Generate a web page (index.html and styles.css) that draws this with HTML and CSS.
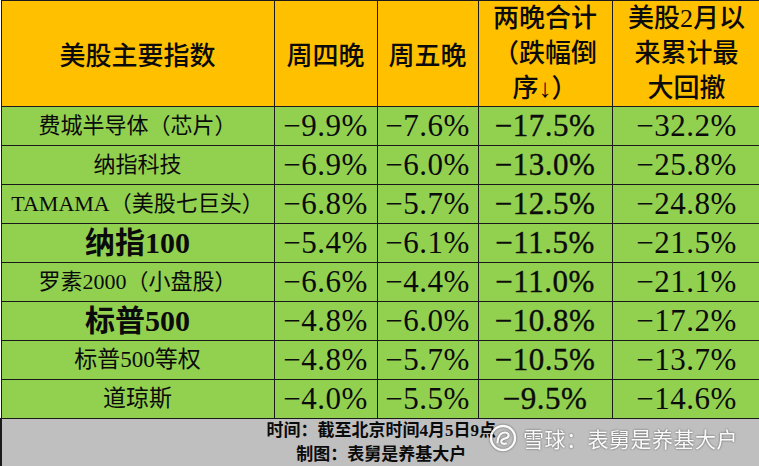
FILE: index.html
```html
<!DOCTYPE html>
<html lang="zh-CN">
<head>
<meta charset="utf-8">
<link rel="stylesheet" href="styles.css">
</head>
<body>
<div class="wrap">
<table class="tbl">
  <colgroup>
    <col class="c1"><col class="c2"><col class="c3"><col class="c4"><col class="c5">
  </colgroup>
  <thead>
    <tr class="head">
      <th>美股主要指数</th>
      <th>周四晚</th>
      <th>周五晚</th>
      <th class="multi">两晚合计<br>（跌幅倒<br>序↓）</th>
      <th class="multi">美股2月以<br>来累计最<br>大回撤</th>
    </tr>
  </thead>
  <tbody>
    <tr><td class="name">费城半导体（芯片）</td><td class="num">−9.9%</td><td class="num">−7.6%</td><td class="num sum">−17.5%</td><td class="num">−32.2%</td></tr>
    <tr><td class="name">纳指科技</td><td class="num">−6.9%</td><td class="num">−6.0%</td><td class="num sum">−13.0%</td><td class="num">−25.8%</td></tr>
    <tr><td class="name">TAMAMA（美股七巨头）</td><td class="num">−6.8%</td><td class="num">−5.7%</td><td class="num sum">−12.5%</td><td class="num">−24.8%</td></tr>
    <tr><td class="name big">纳指100</td><td class="num">−5.4%</td><td class="num">−6.1%</td><td class="num sum">−11.5%</td><td class="num">−21.5%</td></tr>
    <tr><td class="name">罗素2000（小盘股）</td><td class="num">−6.6%</td><td class="num">−4.4%</td><td class="num sum">−11.0%</td><td class="num">−21.1%</td></tr>
    <tr><td class="name big">标普500</td><td class="num">−4.8%</td><td class="num">−6.0%</td><td class="num sum">−10.8%</td><td class="num">−17.2%</td></tr>
    <tr><td class="name mid">标普500等权</td><td class="num">−4.8%</td><td class="num">−5.7%</td><td class="num sum">−10.5%</td><td class="num">−13.7%</td></tr>
    <tr><td class="name mid">道琼斯</td><td class="num">−4.0%</td><td class="num">−5.5%</td><td class="num sum">−9.5%</td><td class="num">−14.6%</td></tr>
  </tbody>
  <tfoot>
    <tr class="foot">
      <td colspan="5">时间：截至北京时间4月5日9点<br>制图：表舅是养基大户</td>
    </tr>
  </tfoot>
</table>
<div class="watermark">
  <svg class="wm-logo" viewBox="0 0 28 28" width="28" height="28">
    <circle cx="14" cy="14" r="12" fill="none" stroke="#fff" stroke-width="2.4"/>
    <path d="M8.5 18.5 C9 12 12 8.5 16 8.5 C19 8.5 20.5 11 19 13 C17.5 15 14 14 12.5 16.5 C11.5 18.5 13.5 20.5 17 19.5" fill="none" stroke="#fff" stroke-width="2.2" stroke-linecap="round"/>
  </svg>
  <span class="wm-text">雪球：表舅是养基大户</span>
</div>
</div>
</body>
</html>
```
FILE: styles.css
```css
html, body {
  margin: 0;
  padding: 0;
  background: #ffffff;
}
.wrap {
  position: relative;
  width: 759px;
  height: 466px;
  overflow: hidden;
}
.tbl {
  border-collapse: collapse;
  table-layout: fixed;
  width: 760px;
  color: #0b0b0b;
}
.c1 { width: 273px; }
.c2 { width: 103px; }
.c3 { width: 101px; }
.c4 { width: 134px; }
.c5 { width: 149px; }
.tbl th, .tbl td {
  border: 1px solid #1a1a1a;
  padding: 0;
  text-align: center;
  vertical-align: middle;
}
.head th {
  background: #ffc000;
  height: 104px;
  font-family: "Noto Sans CJK SC", sans-serif;
  font-size: 26px;
  font-weight: 500;
  line-height: 35px;
}
.head th.multi {
  font-family: "Liberation Serif", "Noto Sans CJK SC", serif;
}
tbody td {
  background: #92d050;
  height: 38px;
  line-height: 38px;
}
.name {
  font-family: "Liberation Serif", "Noto Sans CJK SC", serif;
  font-size: 22px;
}
.name.big {
  font-size: 30px;
  font-weight: 700;
}
.name.mid {
  font-size: 23px;
}
.num {
  font-family: "Liberation Serif", serif;
  font-size: 31px;
  letter-spacing: 0.5px;
}
.num.sum {
  -webkit-text-stroke: 0.35px #0b0b0b;
}
.foot td {
  background: #bfbfbf;
  height: 47px;
  font-family: "Liberation Serif", "Noto Sans CJK SC", serif;
  font-weight: 700;
  font-size: 17px;
  line-height: 24px;
  border-left: 2px solid #1a1a1a;
  border-bottom: 2px solid #1a1a1a;
}
.watermark {
  position: absolute;
  left: 489px;
  top: 424px;
  display: flex;
  align-items: center;
  gap: 6px;
  color: #ffffff;
  opacity: 0.92;
  filter: drop-shadow(0 0 1px rgba(0,0,0,0.55));
}
.wm-logo {
  display: block;
}
.wm-text {
  font-family: "Noto Sans CJK SC", sans-serif;
  font-size: 21px;
  line-height: 28px;
  letter-spacing: 0.5px;
}
```
